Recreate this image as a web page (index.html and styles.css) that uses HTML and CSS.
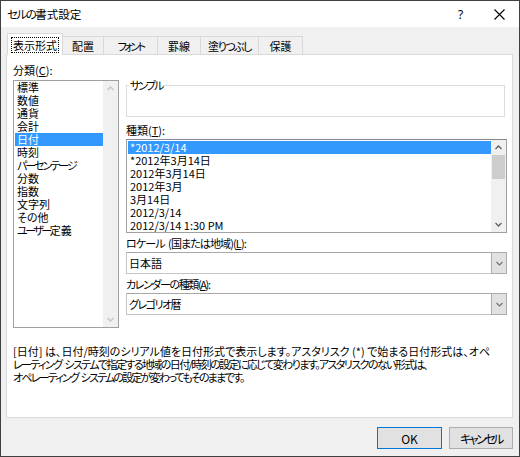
FILE: index.html
```html
<!DOCTYPE html>
<html lang="ja">
<head>
<meta charset="utf-8">
<title>セルの書式設定</title>
<link rel="stylesheet" href="styles.css">
</head>
<body>
<div class="window">
  <div class="titlebar">
    <div class="title"><span class="ls-15">セルの</span>書式設定</div>
    <div class="tb-btn help">?</div>
    <div class="tb-btn close"><svg width="11" height="11" viewBox="0 0 11 11"><path d="M0.5 0.5L10.5 10.5M10.5 0.5L0.5 10.5" stroke="#000" stroke-width="1.1" fill="none"/></svg></div>
  </div>
  <div class="content">
    <div class="tabs">
      <div class="tab selected"><span class="focus">表示形式</span></div>
      <div class="tab w-haichi">配置</div>
      <div class="tab w-font"><span class="ls-25">フォント</span></div>
      <div class="tab w-keisen">罫線</div>
      <div class="tab w-nuri"><span class="ls-15">塗りつぶし</span></div>
      <div class="tab w-hogo">保護</div>
    </div>
    <div class="panel">
      <div class="cols">
        <div class="leftcol">
          <div class="label">分類(<u>C</u>):</div>
          <div class="listbox cat">
            <div class="items">
              <div class="item">標準</div>
              <div class="item">数値</div>
              <div class="item">通貨</div>
              <div class="item">会計</div>
              <div class="item sel">日付</div>
              <div class="item">時刻</div>
              <div class="item"><span class="ls-2">パーセンテージ</span></div>
              <div class="item">分数</div>
              <div class="item">指数</div>
              <div class="item">文字列</div>
              <div class="item">その他</div>
              <div class="item"><span class="ls-25">ユーザー</span>定義</div>
            </div>
            <div class="vscroll disabled">
              <div class="sb-btn"><svg width="7" height="5" viewBox="0 0 7 5"><path d="M0.5 4L3.5 1L6.5 4" stroke="#c3c3c3" stroke-width="1.3" fill="none"/></svg></div>
              <div class="track"></div>
              <div class="sb-btn"><svg width="7" height="5" viewBox="0 0 7 5"><path d="M0.5 1L3.5 4L6.5 1" stroke="#c3c3c3" stroke-width="1.3" fill="none"/></svg></div>
            </div>
          </div>
        </div>
        <div class="rightcol">
          <fieldset class="sample">
            <legend><span class="ls-2">サンプル</span></legend>
            <div class="sample-body"></div>
          </fieldset>
          <div class="label gap5">種類(<u>T</u>):</div>
          <div class="listbox types">
            <div class="items">
              <div class="item sel">*2012/3/14</div>
              <div class="item">*2012年3月14日</div>
              <div class="item">2012年3月14日</div>
              <div class="item">2012年3月</div>
              <div class="item">3月14日</div>
              <div class="item">2012/3/14</div>
              <div class="item">2012/3/14 1:30 PM</div>
            </div>
            <div class="vscroll">
              <div class="sb-btn"><svg width="7" height="5" viewBox="0 0 7 5"><path d="M0.5 4L3.5 1L6.5 4" stroke="#606060" stroke-width="1.3" fill="none"/></svg></div>
              <div class="track"><div class="thumb"></div></div>
              <div class="sb-btn"><svg width="7" height="5" viewBox="0 0 7 5"><path d="M0.5 1L3.5 4L6.5 1" stroke="#606060" stroke-width="1.3" fill="none"/></svg></div>
            </div>
          </div>
          <div class="label gap2 ls-09 ws">ロケール (国または地域)(<u>L</u>):</div>
          <div class="combo">
            <div class="combo-text">日本語</div>
            <div class="combo-btn"><svg width="7" height="5" viewBox="0 0 7 5"><path d="M0.5 1L3.5 4L6.5 1" stroke="#707070" stroke-width="1.1" fill="none"/></svg></div>
          </div>
          <div class="label gap2 ls-14">カレンダーの種類(<u>A</u>):</div>
          <div class="combo">
            <div class="combo-text ls-15">グレゴリオ暦</div>
            <div class="combo-btn"><svg width="7" height="5" viewBox="0 0 7 5"><path d="M0.5 1L3.5 4L6.5 1" stroke="#707070" stroke-width="1.1" fill="none"/></svg></div>
          </div>
        </div>
      </div>
      <p class="desc"><span class="line">[日付] は、日付/時刻のシリアル値を日付形式で表示します。アスタリスク (*) で始まる日付形式は、オペ</span><span class="line ls-16 ws">レーティング システムで指定する地域の日付/時刻の設定に応じて変わります。アスタリスクのない形式は、</span><span class="line ls-18 ws">オペレーティング システムの設定が変わってもそのままです。</span></p>
    </div>
    <div class="buttons">
      <button class="btn default">OK</button>
      <button class="btn cancel"><span class="ls-25">キャンセル</span></button>
    </div>
  </div>
</div>
</body>
</html>
```

FILE: styles.css
```css
* { box-sizing: border-box; }
html, body { margin: 0; padding: 0; }
body {
  font-family: "Noto Sans CJK JP", "Noto Sans", sans-serif;
  font-size: 11px;
  color: #000;
  font-feature-settings: "palt";
  background: #f0f0f0;
}
.ls-09 { letter-spacing: -0.9px; }
.ls-14 { letter-spacing: -1.4px; }
.ls-15 { letter-spacing: -1.5px; }
.ls-16 { letter-spacing: -1.6px; }
.ls-18 { letter-spacing: -1.8px; }
.ls-2 { letter-spacing: -2px; }
.ls-25 { letter-spacing: -2.5px; }
.ws { word-spacing: 2px; }
.window {
  width: 520px;
  height: 457px;
  border: 1px solid #404040;
  background: #f0f0f0;
  display: flex;
  flex-direction: column;
}
.titlebar {
  height: 26px;
  background: #fff;
  display: flex;
  align-items: center;
}
.title {
  flex: 1;
  padding-left: 6px;
  font-size: 11.5px;
  line-height: 16px;
}
.tb-btn {
  width: 39px;
  height: 26px;
  display: flex;
  align-items: center;
  justify-content: center;
}
.help { font-size: 12px; font-family: "Noto Sans", sans-serif; }
.content { padding: 6px 6px 0 5px; }
.tabs {
  display: flex;
  align-items: flex-end;
  padding-left: 1px;
  height: 22px;
}
.tab {
  height: 19px;
  border: 1px solid #d9d9d9;
  border-bottom: none;
  margin-left: -1px;
  display: flex;
  align-items: center;
  justify-content: center;
  line-height: 16px;
  white-space: nowrap;
}
.tab.selected {
  height: 22px;
  width: 56px;
  margin-left: 0;
  background: #fff;
  position: relative;
  z-index: 1;
  padding: 3px 3px 0;
  align-items: flex-start;
}
.focus {
  display: block;
  width: 100%;
  height: 16px;
  border: 1px dotted #000;
  text-align: center;
  line-height: 14px;
}
.w-haichi { width: 42px; }
.w-font { width: 55px; }
.w-keisen { width: 44px; }
.w-nuri { width: 59px; }
.w-hogo { width: 45px; }
.panel {
  margin-top: -1px;
  height: 364px;
  border: 1px solid #d9d9d9;
  background: #fff;
  padding: 7px 5px 0 6px;
}
.cols { display: flex; gap: 7px; }
.leftcol { width: 106px; }
.rightcol { flex: 1; min-width: 0; }
.label {
  height: 16px;
  line-height: 16px;
  white-space: nowrap;
}
.leftcol .label { margin-bottom: 2px; }
.gap5 { margin-top: 5px; margin-bottom: 1px; }
.gap2 { margin-top: 2px; margin-bottom: 1px; }
.listbox {
  border: 1px solid #a0a0a0;
  background: #fff;
  display: flex;
}
.listbox.cat { height: 248px; }
.listbox.types { height: 94px; border-top-color: #828790; }
.items { flex: 1; min-width: 0; padding: 0 0 0 1px; }
.types .items { padding-top: 1px; }
.item {
  height: 13px;
  line-height: 13px;
  padding-left: 2px;
  white-space: nowrap;
}
.item.sel { background: #3399ff; color: #fff; }
.vscroll {
  width: 15px;
  background: #f0f0f0;
  display: flex;
  flex-direction: column;
}
.sb-btn {
  height: 15px;
  display: flex;
  align-items: center;
  justify-content: center;
}
.track { flex: 1; padding: 0 1px; }
.thumb { height: 24px; background: #cdcdcd; }
.sample {
  margin: 15px 2px 0 0;
  border: 1px solid #dcdcdc;
  padding: 0 0 0 1px;
  min-width: 0;
}
.sample legend {
  padding: 0 1px;
  margin-left: 1px;
  height: 16px;
  line-height: 16px;
}
.sample-body { height: 23px; }
.combo {
  height: 22px;
  border: 1px solid #c4c4c4;
  border-top-color: #a8a8a8;
  background: #fff;
  display: flex;
}
.combo-text {
  flex: 1;
  padding-left: 2px;
  line-height: 20px;
  white-space: nowrap;
}
.combo-btn {
  width: 16px;
  margin: -1px -1px -1px 0;
  border: 1px solid #adadad;
  background: #e1e1e1;
  display: flex;
  align-items: center;
  justify-content: center;
}
.desc {
  margin: 17px 0 0;
  white-space: nowrap;
}
.desc .line {
  display: block;
  height: 13px;
  line-height: 13px;
}
.buttons {
  display: flex;
  justify-content: flex-end;
  gap: 7px;
  margin-top: 9px;
}
.btn {
  font: inherit;
  font-size: 12px;
  height: 22px;
  width: 65px;
  background: #e1e1e1;
  border: 1px solid #adadad;
  padding: 0;
  color: #000;
}
.btn.cancel { width: 64px; }
.btn.default { border-color: #0078d7; }
```
